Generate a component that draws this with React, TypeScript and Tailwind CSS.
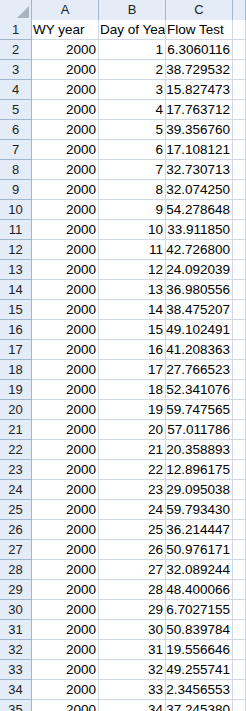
import React from "react";

const flow = [
  "6.3060116","38.729532","15.827473","17.763712","39.356760","17.108121","32.730713","32.074250","54.278648","33.911850","42.726800","24.092039","36.980556","38.475207","49.102491","41.208363","27.766523","52.341076","59.747565","57.011786","20.358893","12.896175","29.095038","59.793430","36.214447","50.976171","32.089244","48.400066","6.7027155","50.839784","19.556646","49.255741","2.3456553","37.245380",
];

const hdr = "border-r border-b border-[#9eb6ce] bg-[#e4ecf7] text-[#1e1e1e] text-[13px] flex items-center justify-center";
const cell = "border-r border-b border-[#d0d7e5] bg-white overflow-hidden whitespace-nowrap flex items-end pb-[2px] leading-[15px]";

export default function App() {
  return (
    <div
      className="w-[246px] h-[711px] overflow-hidden bg-white text-[13.5px] text-black"
      style={{ fontFamily: '"Liberation Sans", Arial, sans-serif' }}
    >
      <div className="grid grid-cols-[32px_67px_67px_67px_1fr] auto-rows-[20px]">
        <div className={hdr + " !items-end !justify-end pr-[2px] pb-[2px] h-[21px]"}>
          <svg width="12" height="12" viewBox="0 0 12 12">
            <polygon points="12,0 12,12 0,12" fill="#a9b3c0" />
          </svg>
        </div>
        <div className={hdr + " h-[21px]"}>A</div>
        <div className={hdr + " h-[21px]"}>B</div>
        <div className={hdr + " h-[21px]"}>C</div>
        <div className={hdr + " h-[21px]"}></div>

        <div className={hdr}>1</div>
        <div className={cell + " pl-[1px]"}>WY year</div>
        <div className={cell + " pl-[1px]"}>Day of Year</div>
        <div className={cell + " pl-[1px]"}>Flow Test</div>
        <div className={cell}></div>

        {flow.map((f, i) => (
          <React.Fragment key={i}>
            <div className={hdr}>{i + 2}</div>
            <div className={cell + " justify-end pr-[2px]"}>2000</div>
            <div className={cell + " justify-end pr-[2px]"}>{i + 1}</div>
            <div className={cell + " justify-end pr-[2px]"}>{f}</div>
            <div className={cell}></div>
          </React.Fragment>
        ))}
      </div>
    </div>
  );
}
